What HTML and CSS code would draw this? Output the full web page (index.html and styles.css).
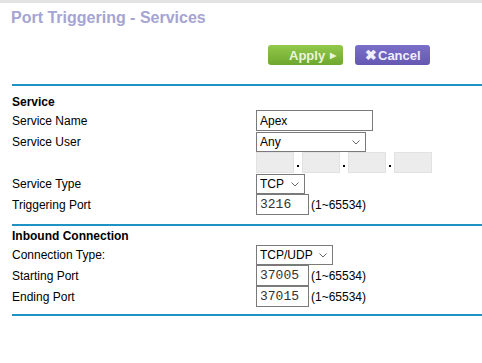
FILE: index.html
```html
<!DOCTYPE html>
<html lang="en">
<head>
    <meta charset="UTF-8">
    <title>Port Triggering - Services</title>
    <link rel="stylesheet" href="styles.css">
</head>
<body>
    <div class="topbar"></div>
    <h1 class="title">Port Triggering - Services</h1>

    <div class="actions">
        <button class="btn btn-apply">Apply <span class="arrow">&#9654;</span></button>
        <button class="btn btn-cancel"><span class="x">&#10006;</span>Cancel</button>
    </div>

    <div class="rule"></div>

    <div class="section">
        <div class="heading">Service</div>
        <div class="row">
            <label>Service Name</label>
            <input class="text name" type="text" value="Apex">
        </div>
        <div class="row">
            <label>Service User</label>
            <span class="select user">
                <select><option>Any</option></select>
                <svg class="chev" width="8" height="5" viewBox="0 0 8 5"><path d="M0.5 0.5 L4 4 L7.5 0.5" fill="none" stroke="#666" stroke-width="1"/></svg>
            </span>
        </div>
        <div class="row">
            <label></label>
            <div class="ip">
                <input class="octet" type="text" disabled><span class="dot"></span>
                <input class="octet" type="text" disabled><span class="dot"></span>
                <input class="octet" type="text" disabled><span class="dot"></span>
                <input class="octet" type="text" disabled>
            </div>
        </div>
        <div class="row">
            <label>Service Type</label>
            <span class="select type">
                <select><option>TCP</option></select>
                <svg class="chev" width="8" height="5" viewBox="0 0 8 5"><path d="M0.5 0.5 L4 4 L7.5 0.5" fill="none" stroke="#666" stroke-width="1"/></svg>
            </span>
        </div>
        <div class="row">
            <label>Triggering Port</label>
            <input class="text port" type="text" value="3216"><span class="range">(1~65534)</span>
        </div>
    </div>

    <div class="rule"></div>

    <div class="section inbound">
        <div class="heading">Inbound Connection</div>
        <div class="row">
            <label>Connection Type:</label>
            <span class="select proto">
                <select><option>TCP/UDP</option></select>
                <svg class="chev" width="8" height="5" viewBox="0 0 8 5"><path d="M0.5 0.5 L4 4 L7.5 0.5" fill="none" stroke="#666" stroke-width="1"/></svg>
            </span>
        </div>
        <div class="row">
            <label>Starting Port</label>
            <input class="text port" type="text" value="37005"><span class="range">(1~65534)</span>
        </div>
        <div class="row">
            <label>Ending Port</label>
            <input class="text port" type="text" value="37015"><span class="range">(1~65534)</span>
        </div>
    </div>

    <div class="rule"></div>
</body>
</html>
```

FILE: styles.css
```css
body {
    margin: 0;
    font-family: 'Liberation Sans', Arial, sans-serif;
    font-size: 12px;
    color: #000;
    background: #fff;
}
.topbar {
    height: 3px;
    background: #e3e3e3;
}
.title {
    margin: 5px 0 0 11px;
    font-size: 16px;
    line-height: 19px;
    color: #a5a4d2;
}
.actions {
    display: flex;
    gap: 12px;
    margin: 18px 0 0 268px;
}
.btn {
    width: 75px;
    height: 20px;
    border: none;
    border-radius: 3px;
    font-family: 'Liberation Sans', Arial, sans-serif;
    font-size: 13px;
    font-weight: bold;
    padding: 0;
    display: flex;
    align-items: center;
}
.btn-apply {
    background: linear-gradient(#92c94a, #6fa72f);
    color: #e9f5dc;
    padding-left: 21px;
}
.btn-apply .arrow {
    font-size: 8px;
    margin-left: 5px;
}
.btn-cancel {
    background: linear-gradient(#7a6fc8, #6558b3);
    color: #f0efff;
    padding-left: 10px;
}
.btn-cancel .x {
    font-size: 14px;
    margin-right: 1px;
}
.rule {
    height: 2px;
    margin-left: 12px;
    background: #1d93c5;
}
.actions + .rule {
    margin-top: 19px;
}
.section {
    padding: 8px 0 9px 12px;
}
.heading {
    font-weight: bold;
    line-height: 16px;
}
.row {
    display: flex;
    align-items: center;
    min-height: 21px;
}
.row label {
    width: 244px;
    flex-shrink: 0;
}
.text {
    box-sizing: border-box;
    height: 21px;
    margin: 0;
    border: 1px solid #7a7a7a;
    padding: 0 3px;
    font-family: 'Liberation Sans', Arial, sans-serif;
    font-size: 12px;
    color: #000;
}
.name {
    width: 117px;
}
.port {
    width: 53px;
    font-family: 'Liberation Mono', 'Courier New', monospace;
    font-size: 13px;
    color: #333;
}
.range {
    margin-left: 2px;
}
.select {
    position: relative;
    display: inline-block;
    height: 20px;
}
.select select {
    appearance: none;
    box-sizing: border-box;
    height: 20px;
    width: 100%;
    margin: 0;
    border: 1px solid #7a7a7a;
    border-radius: 0;
    background: #fff;
    padding: 0 3px;
    font-family: 'Liberation Sans', Arial, sans-serif;
    font-size: 12px;
    color: #000;
}
.select .chev {
    position: absolute;
    right: 6px;
    top: 8px;
}
.user {
    width: 110px;
}
.type {
    width: 49px;
}
.proto {
    width: 77px;
}
.ip {
    display: flex;
    align-items: center;
}
.octet {
    box-sizing: border-box;
    width: 38px;
    height: 21px;
    margin: 0;
    border: 1px solid #e2e2e2;
    background: #ececec;
}
.dot {
    width: 8px;
    height: 21px;
    position: relative;
}
.dot::after {
    content: '';
    position: absolute;
    left: 3px;
    top: 13px;
    width: 2px;
    height: 2px;
    background: #000;
}
.inbound {
    padding-top: 2px;
    padding-bottom: 7px;
}
```
